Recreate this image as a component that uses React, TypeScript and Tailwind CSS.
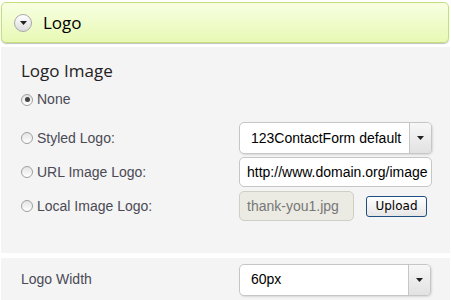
const Radio = ({ checked }: { checked?: boolean }) => (
  <span className="relative inline-flex h-[12px] w-[12px] shrink-0 items-center justify-center rounded-full border border-[#a0a0a0] bg-gradient-to-b from-[#e4e4e4] to-[#ffffff]">
    {checked && <span className="h-[5px] w-[5px] rounded-full bg-[#444]" />}
  </span>
);

const Caret = () => (
  <svg width="7" height="4" viewBox="0 0 7 4">
    <path d="M0 0h7L3.5 4z" fill="#222" />
  </svg>
);

const SelectBox = ({ value, className }: { value: string; className: string }) => (
  <div className={`flex overflow-hidden rounded-[5px] border border-[#c6c6c6] bg-white shadow-[1px_1px_2px_rgba(0,0,0,0.12)] ${className}`}>
    <div className="flex flex-1 items-center overflow-hidden whitespace-nowrap pl-[11px] text-[14px] text-black">{value}</div>
    <div className="flex w-[22px] items-center justify-center border-l border-[#c6c6c6] bg-gradient-to-b from-[#f7f7f7] to-[#e2e2e2]">
      <Caret />
    </div>
  </div>
);

const Row = ({ label, children }: { label: string; children?: React.ReactNode }) => (
  <div className="flex h-[34px] items-center">
    <div className="flex w-[218px] items-center gap-[4px] text-[14px] text-[#4a4a55]">
      <Radio />
      <span>{label}</span>
    </div>
    {children}
  </div>
);

export default function App() {
  return (
    <div className="h-[300px] w-[451px] overflow-hidden bg-white pt-[2px] font-['Liberation_Sans',Arial,sans-serif]">
      <div className="mx-[1px] flex h-[41px] w-[448px] items-center gap-[11px] rounded-[5px] border border-[#c3e07c] bg-gradient-to-b from-[#f8ffe2] to-[#e7f9b4] pl-[12px] shadow-[0_1px_1px_rgba(0,0,0,0.25)]">
        <span className="flex h-[18px] w-[18px] items-center justify-center rounded-full border border-[#a8a8a8] bg-gradient-to-b from-[#ffffff] to-[#dcdcdc]">
          <Caret />
        </span>
        <span className="pt-[1px] font-['Open_Sans',sans-serif] text-[17px] text-black">Logo</span>
      </div>

      <div className="mx-[1px] mt-[4px] h-[206px] bg-[#f4f4f4] pl-[20px] pt-[13px]">
        <div className="font-['Open_Sans',sans-serif] text-[17px] leading-[22px] text-[#222]">Logo Image</div>
        <div className="mt-[6px] flex h-[23px] items-center gap-[4px] text-[14px] text-[#4a4a55]">
          <Radio checked />
          <span>None</span>
        </div>
        <div className="mt-[10px]">
          <Row label="Styled Logo:">
            <SelectBox value="123ContactForm default" className="h-[32px] w-[193px]" />
          </Row>
          <Row label="URL Image Logo:">
            <div className="flex h-[30px] w-[193px] items-center overflow-hidden whitespace-nowrap rounded-[5px] border border-[#c6c6c6] bg-white pl-[7px] text-[14px] text-black">
              http://www.domain.org/image
            </div>
          </Row>
          <Row label="Local Image Logo:">
            <div className="flex h-[30px] w-[115px] items-center rounded-[5px] border border-[#cfcfc6] bg-[#ebebe4] pl-[7px] text-[14px] text-[#777]">
              thank-you1.jpg
            </div>
            <button className="ml-[12px] h-[21px] w-[61px] rounded-[3px] border border-[#1e4f80] bg-gradient-to-b from-[#ffffff] to-[#e6e6e6] font-['DejaVu_Sans',sans-serif] text-[12px] text-black">
              Upload
            </button>
          </Row>
        </div>
      </div>

      <div className="mx-[1px] mt-[5px] flex h-[43px] items-center bg-[#f4f4f4] pl-[20px]">
        <div className="w-[218px] text-[14px] text-[#4a4a55]">Logo Width</div>
        <SelectBox value="60px" className="h-[32px] w-[192px]" />
      </div>
    </div>
  );
}
